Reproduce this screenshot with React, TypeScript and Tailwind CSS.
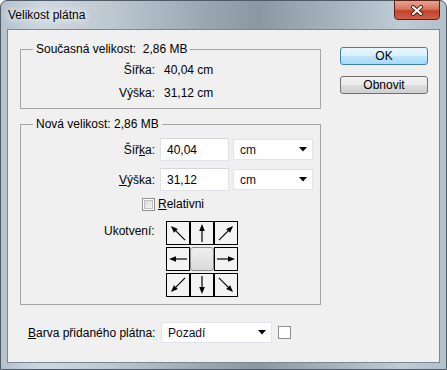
import React from 'react';

const font = { fontFamily: '"Liberation Sans", Arial, sans-serif' };

// one anchor arrow, drawn from the cell centre outwards
function Arrow({ dx, dy }: { dx: number; dy: number }) {
  const len = Math.hypot(dx, dy);
  const ux = dx / len;
  const uy = dy / len;
  const h = dx !== 0 && dy !== 0 ? 10 : 9;
  const tip = [11 + ux * h, 11 + uy * h];
  const tail = [11 - ux * h, 11 - uy * h];
  const base = [tip[0] - ux * 7, tip[1] - uy * 7];
  const px = -uy * 2.8;
  const py = ux * 2.8;
  return (
    <svg width="22" height="22" viewBox="0 0 22 22">
      <line x1={tail[0]} y1={tail[1]} x2={base[0]} y2={base[1]} stroke="#000" strokeWidth="1.2" />
      <polygon
        points={`${tip[0]},${tip[1]} ${base[0] + px},${base[1] + py} ${base[0] - px},${base[1] - py}`}
        fill="#000"
      />
    </svg>
  );
}

function Cell({ dx, dy }: { dx: number; dy: number }) {
  return (
    <div className="w-[24px] h-[24px] border border-black bg-[#f3f3f3] flex items-center justify-center">
      <Arrow dx={dx} dy={dy} />
    </div>
  );
}

function Select({ value, width }: { value: string; width: string }) {
  return (
    <div className={`${width} h-[21px] bg-white border border-[#e2e3ea] flex items-center pl-[6px] pr-[5px]`}>
      <span className="flex-1 text-[12px] leading-[14px] text-[#1a0a2a]">{value}</span>
      <svg width="8" height="5" viewBox="0 0 8 5">
        <polygon points="0,0 8,0 4,4.5" fill="#000" />
      </svg>
    </div>
  );
}

export default function App() {
  return (
    <div
      className="w-[447px] h-[370px] rounded-t-[7px] border border-[#4f5b66] bg-[linear-gradient(90deg,#b4c2ce_0%,#cfd8e0_10%,#bcc7d0_25%,#9ba8b2_45%,#8b98a2_58%,#a7b3bc_75%,#c0ccd5_90%,#b2c0cc_100%)] flex flex-col text-black"
      style={font}
    >
      {/* title bar */}
      <div className="h-[28px] flex items-start">
        <span className="pl-[7px] pt-[7px] text-[12px] leading-[14px] [text-shadow:0_0_6px_#fff,0_0_10px_#fff]">
          Velikost plátna
        </span>
        <div className="ml-auto mr-[6px] -mt-[1px] w-[46px] h-[20px] rounded-b-[4px] border border-[#5a2118] bg-[linear-gradient(180deg,#e9a391_0%,#d7755f_45%,#c2432b_55%,#d0614a_100%)] flex items-center justify-center">
          <svg width="14" height="11" viewBox="0 0 14 11">
            <path d="M3 2 L11 9 M11 2 L3 9" stroke="#4a1c14" strokeWidth="4" strokeLinecap="round" />
            <path d="M3 2 L11 9 M11 2 L3 9" stroke="#fff" strokeWidth="2.2" strokeLinecap="round" />
          </svg>
        </div>
      </div>

      {/* client area */}
      <div className="mx-[6px] h-[334px] border border-[#7b8894] bg-[#f0f0f0] flex">
        <div className="ml-[12px] w-[301px] flex flex-col">
          {/* current size */}
          <fieldset className="mt-[12px] h-[67px] border border-[#a5a5a5]">
            <legend className="ml-[12px] px-[3px] text-[12px] leading-[14px] whitespace-pre">Současná velikost:  2,86 MB</legend>
            <div className="mt-[6px] flex text-[12px] leading-[16px] whitespace-pre">
              <span className="w-[134px] text-right">Šířka:</span>
              <span className="ml-[9px]">40,04 cm</span>
            </div>
            <div className="mt-[7px] flex text-[12px] leading-[16px] whitespace-pre">
              <span className="w-[134px] text-right">Výška:</span>
              <span className="ml-[9px]">31,12 cm</span>
            </div>
          </fieldset>

          {/* new size */}
          <fieldset className="mt-[8px] h-[188px] border border-[#a5a5a5]">
            <legend className="ml-[12px] px-[3px] text-[12px] leading-[14px]">Nová velikost: 2,86 MB</legend>
            <div className="mt-[7px] flex items-center text-[12px]">
              <span className="w-[134px] text-right">
                Šíř<span className="underline">k</span>a:
              </span>
              <div className="ml-[5px] w-[69px] h-[23px] bg-white border border-[#e2e3ea] border-t-[#d5d6dc] flex items-center pl-[6px] leading-[14px]">
                40,04
              </div>
              <div className="ml-[4px]">
                <Select value="cm" width="w-[80px]" />
              </div>
            </div>
            <div className="mt-[7px] flex items-center text-[12px]">
              <span className="w-[134px] text-right">
                <span className="underline">V</span>ýška:
              </span>
              <div className="ml-[5px] w-[69px] h-[23px] bg-white border border-[#e2e3ea] border-t-[#d5d6dc] flex items-center pl-[6px] leading-[14px]">
                31,12
              </div>
              <div className="ml-[4px]">
                <Select value="cm" width="w-[80px]" />
              </div>
            </div>
            <div className="mt-[6px] ml-[121px] flex items-center text-[12px] leading-[14px]">
              <div className="w-[13px] h-[13px] border border-[#8e8f8f] p-[1px] bg-white">
                <div className="w-full h-full bg-[linear-gradient(135deg,#d8d8d8,#f7f7f7)] border border-[#bcbcbc]" />
              </div>
              <span className="ml-[3px]">
                <span className="underline">R</span>elativni
              </span>
            </div>
            <div className="mt-[10px] ml-[83px] flex text-[12px] leading-[14px]">
              <span className="w-[62px] mt-[3px]">Ukotvení:</span>
              <div className="flex flex-col gap-[2px]">
                <div className="flex">
                  <Cell dx={-1} dy={-1} />
                  <Cell dx={0} dy={-1} />
                  <Cell dx={1} dy={-1} />
                </div>
                <div className="flex">
                  <Cell dx={-1} dy={0} />
                  <div className="w-[24px] h-[24px] rounded-[3px] border border-[#8a8a8a] bg-[linear-gradient(180deg,#f0f0f0,#dadada)]" />
                  <Cell dx={1} dy={0} />
                </div>
                <div className="flex">
                  <Cell dx={-1} dy={1} />
                  <Cell dx={0} dy={1} />
                  <Cell dx={1} dy={1} />
                </div>
              </div>
            </div>
          </fieldset>

          {/* canvas extension colour */}
          <div className="mt-[17px] ml-[8px] flex items-center text-[12px] leading-[14px]">
            <span className="w-[133px]">
              <span className="underline">B</span>arva přidaného plátna:
            </span>
            <Select value="Pozadí" width="w-[111px]" />
            <div className="ml-[6px] w-[13px] h-[13px] border border-[#8e8e8e] bg-white" />
          </div>
        </div>

        {/* buttons */}
        <div className="ml-[19px] mt-[17px] w-[88px] flex flex-col gap-[11px] text-[12px]">
          <div className="h-[18px] rounded-[3px] border border-[#3c7fb1] bg-[linear-gradient(180deg,#eaf6fd_0%,#d9f0fc_50%,#bee6fd_51%,#a7d9f5_100%)] flex items-center justify-center leading-[14px]">
            OK
          </div>
          <div className="h-[18px] rounded-[3px] border border-[#707070] bg-[linear-gradient(180deg,#f2f2f2_0%,#ebebeb_50%,#dddddd_51%,#cfcfcf_100%)] flex items-center justify-center leading-[14px]">
            Obnovit
          </div>
        </div>
      </div>
    </div>
  );
}
